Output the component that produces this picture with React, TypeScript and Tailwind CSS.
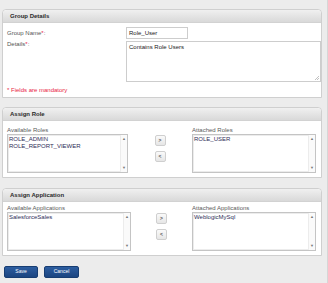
import React from 'react'

const FONT = { fontFamily: '"Liberation Sans", Arial, sans-serif' }

function Panel({ title, className, children }: { title: string; className?: string; children: React.ReactNode }) {
  return (
    <div className={`mx-[2px] w-[320px] rounded-t-[4px] border border-[#cfcfcf] bg-white ${className ?? ''}`}>
      <div className="flex h-[13px] items-center rounded-t-[4px] border-b border-[#d2d2d2] bg-gradient-to-b from-[#f0f0f0] to-[#d9d9d9] pl-[7px] text-[6px] font-bold text-[#2a2a2a]">
        {title}
      </div>
      {children}
    </div>
  )
}

function ListBox({ items, className }: { items: string[]; className?: string }) {
  return (
    <div className={`relative flex border border-[#c4c4c4] bg-white shadow-[inset_0_0_0_1px_#ececec] ${className ?? ''}`}>
      <div className="flex-1 pl-[1px] pt-[1px] text-[6px] leading-[7px] text-[#2e2e58]">
        {items.map((it) => (
          <div key={it}>{it}</div>
        ))}
      </div>
      <div className="flex w-[7px] flex-col items-center justify-between border-l border-[#ececec] bg-[#fafafa] py-[2px] text-[4px] leading-[4px] text-[#777]">
        <span>▲</span>
        <span>▼</span>
      </div>
    </div>
  )
}

function MoveButton({ label }: { label: string }) {
  return (
    <div className="flex h-[11px] w-[11px] items-center justify-center rounded-[2px] border border-[#cfcfcf] bg-gradient-to-b from-[#fafafa] to-[#e6e6e6] text-[5px] font-bold text-[#555]">
      {label}
    </div>
  )
}

function Assign({
  leftLabel,
  rightLabel,
  left,
  right,
  leftW,
  top,
}: {
  leftLabel: string
  rightLabel: string
  left: string[]
  right: string[]
  leftW: string
  top: string
}) {
  return (
    <div className={`flex pb-[4px] pl-[4px] ${top}`}>
      <div className="flex flex-col">
        <div className="h-[7px] text-[6px] leading-[7px] text-[#5a5a5a]">{leftLabel}</div>
        <ListBox items={left} className={`h-[39px] ${leftW}`} />
      </div>
      <div className="flex flex-1 flex-col items-center gap-[5px] pt-[8px]">
        <MoveButton label=">" />
        <MoveButton label="<" />
      </div>
      <div className="mr-[5px] flex flex-col">
        <div className="h-[7px] text-[6px] leading-[7px] text-[#5a5a5a]">{rightLabel}</div>
        <ListBox items={right} className="h-[39px] w-[124px]" />
      </div>
    </div>
  )
}

export default function App() {
  return (
    <div className="h-[283px] w-[328px] overflow-hidden border-r border-[#d6d6d6] bg-[#ececec] pt-[9px]" style={FONT}>
      <Panel title="Group Details">
        <div className="relative h-[74px] pl-[4px] text-[6px] text-[#555]">
          <div className="flex items-center pt-[4px]">
            <div className="w-[119px]">
              Group Name<span className="text-[#e8253f]">*</span>:
            </div>
            <div className="flex h-[12px] w-[62px] items-center border border-[#cdcdcd] pl-[2px] text-[#222]">Role_User</div>
          </div>
          <div className="mt-[2px] flex items-start">
            <div className="w-[119px] leading-[7px]">
              Details<span className="text-[#e8253f]">*</span>:
            </div>
            <div className="relative h-[41px] w-[195px] border border-[#cdcdcd] pl-[2px] pt-[2px] leading-[7px] text-[#222]">
              Contains Role Users
              <svg className="absolute bottom-[1px] right-[1px]" width="4" height="4" viewBox="0 0 4 4">
                <path d="M0 4L4 0M2 4L4 2" stroke="#999" strokeWidth="0.6" />
              </svg>
            </div>
          </div>
          <div className="mt-[5px] leading-[7px] text-[#e8253f]">* Fields are mandatory</div>
        </div>
      </Panel>

      <Panel title="Assign Role" className="mt-[9px]">
        <Assign
          leftLabel="Available Roles"
          rightLabel="Attached Roles"
          left={['ROLE_ADMIN', 'ROLE_REPORT_VIEWER']}
          right={['ROLE_USER']}
          leftW="w-[121px]"
          top="pt-[6px]"
        />
      </Panel>

      <Panel title="Assign Application" className="mt-[10px]">
        <Assign
          leftLabel="Available Applications"
          rightLabel="Attached Applications"
          left={['SalesforceSales']}
          right={['WeblogicMySql']}
          leftW="w-[124px]"
          top="pt-[3px]"
        />
      </Panel>

      <div className="ml-[4px] mt-[10px] flex gap-[6px]">
        <div className="flex h-[12px] w-[34px] items-center justify-center rounded-[2px] border border-[#173d72] bg-gradient-to-b from-[#2c5da0] to-[#1c4580] text-[5px] text-white">
          Save
        </div>
        <div className="flex h-[12px] w-[35px] items-center justify-center rounded-[2px] border border-[#173d72] bg-gradient-to-b from-[#2c5da0] to-[#1c4580] text-[5px] text-white">
          Cancel
        </div>
      </div>
    </div>
  )
}
